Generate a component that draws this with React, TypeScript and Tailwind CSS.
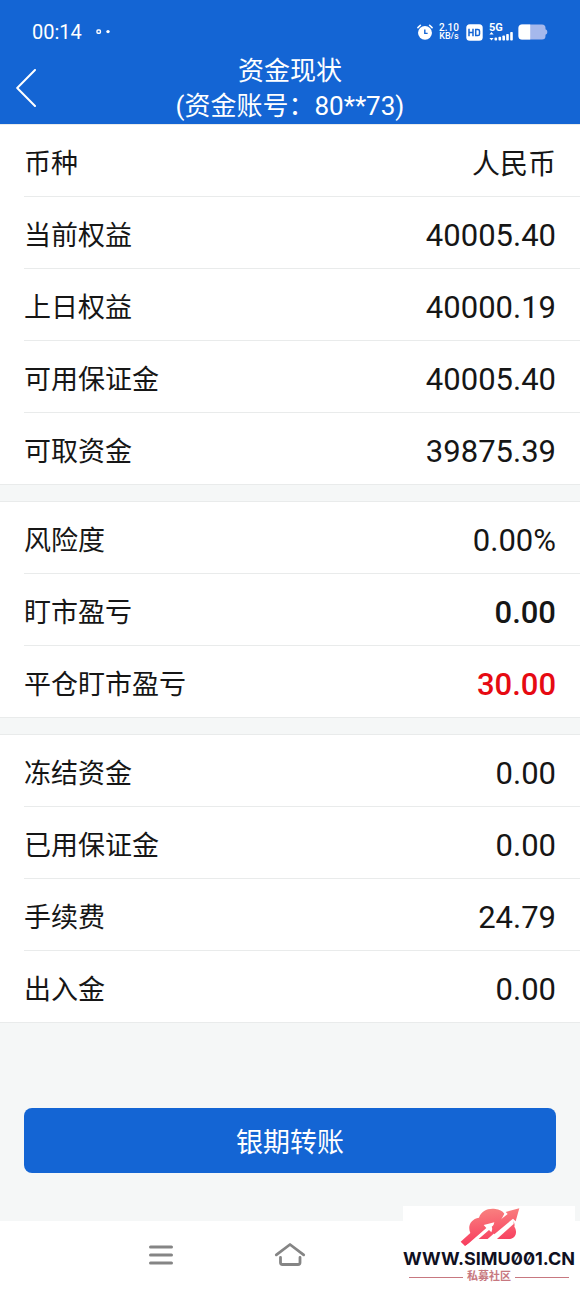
import { clsx } from "clsx";

type Item = {
  label: string;
  value: string;
  className?: string;
};

const groups: Item[][] = [
  [
    { label: "币种", value: "人民币", className: "text-[28px]" },
    { label: "当前权益", value: "40005.40" },
    { label: "上日权益", value: "40000.19" },
    { label: "可用保证金", value: "40005.40" },
    { label: "可取资金", value: "39875.39" },
  ],
  [
    { label: "风险度", value: "0.00%" },
    { label: "盯市盈亏", value: "0.00", className: "text-[31px] font-medium" },
    { label: "平仓盯市盈亏", value: "30.00", className: "text-[31px] font-medium text-[#e60a12]" },
  ],
  [
    { label: "冻结资金", value: "0.00" },
    { label: "已用保证金", value: "0.00" },
    { label: "手续费", value: "24.79" },
    { label: "出入金", value: "0.00" },
  ],
];

function StatusBar() {
  return (
    <div className="flex h-[52px] items-center justify-between pt-3 pr-8 pl-8">

      <div className="flex items-center gap-[14px]">
        <span className="text-xl leading-6">00:14</span>

        <svg width="14" height="6" viewBox="0 0 14 6" fill="none">
          <rect x="1" y="1" width="3.4" height="3.2" rx="1" stroke="currentColor" strokeWidth="1.4" />
          <circle cx="12" cy="2.6" r="1.7" fill="currentColor" />
        </svg>
      </div>

      <div className="flex items-center">

        {/* Alarm */}

        <svg width="16" height="16" viewBox="0 0 17 17" fill="none">
          <circle cx="8.5" cy="9.4" r="7.4" fill="currentColor" />
          <path d="M1 3.800 3.600 1.300M16 3.800 13.400 1.300" stroke="currentColor" strokeWidth="1.7" strokeLinecap="round" />
          <path d="M8.300 5.800v4.200h3" stroke="#1465d4" strokeWidth="1.5" />
        </svg>

        {/* Network speed */}

        <div className="ml-[5px] w-[22px] text-center font-medium">
          <p className="text-[10px] leading-[9px]">2.10</p>
          <p className="text-[9px] leading-[9px]">KB/s</p>
        </div>

        {/* HD */}

        <svg className="ml-[6px]" width="17" height="17" viewBox="0 0 17 17" fill="none">
          <rect x="0.3" y="0.3" width="16.4" height="16.4" rx="3.5" fill="currentColor" />
          <path d="M3 4.800v7.400M7 4.800v7.400M3 8.500h4M9.700 5.500h2.200c1 0 1.600.6 1.600 1.600v2.800c0 1-.6 1.600-1.600 1.600H9.700z" stroke="#1465d4" strokeWidth="1.5" />
        </svg>

        {/* Signal */}

        <div className="ml-[6px] w-6">
          <p className="text-[11px] leading-[8px] font-bold">5G</p>
          <svg width="24" height="9" viewBox="0 0 24 9" fill="currentColor">
            <path d="M2.500 0 4.600 2.600H.4zM2.500 8.500.4 5.900h4.200z" />
            <rect x="5.5" y="5.6" width="2.6" height="2.9" rx="0.8" />
            <rect x="9.5" y="4.8" width="2.6" height="3.7" rx="0.8" />
            <rect x="13.4" y="3.4" width="2.6" height="5.1" rx="0.8" />
            <rect x="17.2" y="2" width="2.6" height="6.5" rx="0.8" />
            <rect x="21.2" y="0" width="2.6" height="8.5" rx="0.8" />
          </svg>
        </div>

        {/* Battery */}

        <svg className="ml-[5px]" width="30" height="16" viewBox="0 0 30 16">
          <path d="M4 .5h20a3.500 3.500 0 0 1 3.500 3.500v1.300c1.300.5 1.800 1.200 1.800 2.700s-.5 2.200-1.800 2.700V12a3.500 3.500 0 0 1-3.500 3.500H4A3.500 3.500 0 0 1 .5 12V4A3.500 3.500 0 0 1 4 .5z" fill="#a5b8ec" />
          <path d="M4 .5h8.200v15H4A3.500 3.500 0 0 1 .5 12V4A3.500 3.500 0 0 1 4 .5z" fill="#fff" />
        </svg>

      </div>

    </div>
  );
}

function Header() {
  return (
    <header className="bg-[#1465d4] text-white">

      <StatusBar />

      <div className="grid h-[72px] grid-cols-[64px_1fr_64px] items-center">

        <button type="button" aria-label="返回" className="h-full pl-4">
          <svg width="21" height="38" viewBox="0 0 21 38" fill="none">
            <path d="M19 1 1.200 19 19 37" stroke="currentColor" strokeWidth="2" strokeLinecap="round" strokeLinejoin="round" />
          </svg>
        </button>

        <h1 className="pt-0.5 text-center text-[26px] leading-[35px]">
          资金现状
          <br />
          (资金账号：80**73)
        </h1>

      </div>

    </header>
  );
}

function Group({ items, first }: { items: Item[]; first: boolean }) {
  return (
    <dl className={clsx("border-y border-[#e9ebeb] bg-white pl-6", !first && "mt-4")}>
      {items.map((item, i) => (
        <div
          key={item.label}
          className={clsx(
            "flex items-center justify-between pt-2 pr-6",
            i < items.length - 1 ? "h-[72px] border-b border-[#e9ebeb]" : "h-[71px]"
          )}
        >
          <dt className="text-[27px]">{item.label}</dt>
          <dd className={item.className ?? "text-[31px]"}>{item.value}</dd>
        </div>
      ))}
    </dl>
  );
}

function NavBar() {
  return (
    <nav className="grid h-[68px] grid-cols-[1fr_258px_1fr] items-center bg-white text-[#858585]">

      <button type="button" aria-label="最近任务" className="-mr-3 justify-self-end">
        <svg width="24" height="20" viewBox="0 0 24 20" fill="none">
          <path d="M1.500 2h21M1.500 10h21M1.500 18h21" stroke="currentColor" strokeWidth="3" strokeLinecap="round" />
        </svg>
      </button>

      <button type="button" aria-label="主页" className="justify-self-center">
        <svg width="32" height="26" viewBox="0 0 32 26" fill="none">
          <path d="M2.300 12.800 16 2.500l13.700 10.300M6.500 15.500v5a2 2 0 0 0 2 2h15.500a2 2 0 0 0 2-2v-5" stroke="currentColor" strokeWidth="2.8" strokeLinecap="round" strokeLinejoin="round" />
        </svg>
      </button>

    </nav>
  );
}

function SiteBadge() {
  return (
    <div className="absolute right-[5px] bottom-0 flex h-[83px] w-[172px] flex-col items-center bg-white pt-0.5">

      <svg width="61" height="40" viewBox="24 24 183 120" fill="none">
        <defs>
          <linearGradient id="cloud" x1="110" y1="24" x2="120" y2="140" gradientUnits="userSpaceOnUse">
            <stop stopColor="#f98280" />
            <stop offset="1" stopColor="#f8375c" />
          </linearGradient>
        </defs>

        {/* Cloud */}

        <path
          d="M29 125 58 99C49 78 59 57 84 53C91 32 111 24 133 27C145 28 154 33 160 41L150 60H184C190 66 192 74 190 80C200 94 196 117 172 117H78L42 138z"
          fill="url(#cloud)"
        />

        {/* Cut-out arrow and stripe */}

        <path d="M44 138 106 84 98 75 130 67 121 97 114 90 82 118 60 140z" fill="#fff" />
        <path d="M109 118 180 56 188 62 188 72 137 118z" fill="#fff" />

        {/* Rising arrow */}

        <path d="M122 80 170 42 164 36 205 25 194 64 186 56 130 103z" fill="url(#cloud)" />
      </svg>

      <p className="mt-0.5 font-[Inter] text-lg leading-[18px] font-bold whitespace-nowrap text-[#10101f] slashed-zero">
        WWW.SIMU001.CN
      </p>

      <div className="mt-0.5 flex w-40 items-center gap-1 text-[#c77880]">
        <span className="h-px flex-1 bg-current" />
        <span className="text-[11px] leading-[14px] font-bold">私募社区</span>
        <span className="h-px flex-1 bg-current" />
      </div>

    </div>
  );
}

export default function App() {
  return (
    <div className="relative flex min-h-screen flex-col bg-[#f5f7f7] font-[Roboto,'Noto_Sans_CJK_SC',sans-serif] text-[#161616]">

      <Header />

      <main className="flex-1">

        {groups.map((items, i) => (
          <Group key={items[0].label} items={items} first={i === 0} />
        ))}

        <div className="px-6 pt-[85px] pb-12">
          <button
            type="button"
            className="h-[65px] w-full rounded-lg bg-[#1465d4] pt-1.5 text-[27px] text-white"
          >
            银期转账
          </button>
        </div>

      </main>

      <NavBar />

      <SiteBadge />

    </div>
  );
}
